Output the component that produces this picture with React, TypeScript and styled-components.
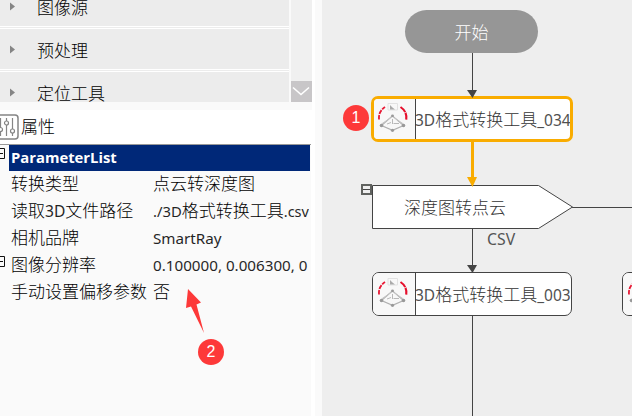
import React from 'react';
import styled, { createGlobalStyle } from 'styled-components';

const Global = createGlobalStyle`
  * { box-sizing: border-box; }
  body { margin: 0; overflow: hidden; font-family: "Noto Sans", "Noto Sans CJK SC", sans-serif; font-size: 17px; font-weight: 300; color: #000; }
  svg { display: block; }
`;

const Window = styled.div`
  display: grid;
  grid-template-columns: 312px 3px 7px 310px;
  width: 632px;
  height: 416px;
  overflow: hidden;
  background: #fff;
`;
const Side = styled.aside`
  display: flex;
  flex-direction: column;
  min-width: 0;
  height: 416px;
`;
const Splitter = styled.div`
  grid-column: 3;
  background: #fafafa;
`;
const ToolArea = styled.div`
  display: flex;
  gap: 2px;
  height: 110px;
  padding-bottom: 8px;
  background: #fafafa;
`;
const ToolList = styled.div`
  width: 289px;
  height: 102px;
  overflow: hidden;
  background: #fff;
`;
const ToolGroup = styled.div<{ $first?: boolean }>`
  display: flex;
  align-items: center;
  height: 40px;
  margin-top: ${(p) => (p.$first ? '-14px' : '0')};
  padding-left: 10px;
  gap: 22px;
  background: #ececec;
  color: #000;
  line-height: 20px;
`;
const GroupLabel = styled.span`
  padding-top: 3px;
`;
const Rule = styled.div`
  height: 3px;
  background: #ececec;
  border: solid #fff;
  border-width: 1px 0;
`;
const Scrollbar = styled.div`
  display: flex;
  flex-direction: column;
  justify-content: flex-end;
  width: 21px;
  height: 102px;
  background: #f0f0f0;
`;
const ScrollButton = styled.div`
  height: 21px;
  background: #c8c6c8;
`;
const Heading = styled.div`
  display: flex;
  align-items: center;
  gap: 2px;
  height: 34px;
  color: #000;
  line-height: 24px;
`;
const Grid = styled.div`
  flex: 1;
  width: 311px;
  border-top: 1px solid #999;
  background: #fafafa;
`;
const GridHeader = styled.div`
  display: grid;
  grid-template-columns: 9px 301px;
  height: 26px;
`;
const GridTitle = styled.div`
  padding-left: 2px;
  background: #002878;
  color: #fff;
  font: 700 14.8px/25px "Open Sans", sans-serif;
`;
const GridRow = styled.div`
  display: grid;
  grid-template-columns: 11px 142px 156px;
  height: 27px;
  line-height: 26px;
  white-space: nowrap;
`;
const Value = styled.div`
  overflow: hidden;
`;
const Latin = styled.span<{ $size?: number }>`
  font-family: "Noto Sans", sans-serif;
  font-size: ${(p) => p.$size ?? 15.6}px;
  font-weight: 400;
  opacity: 0.86;
`;
const Canvas = styled.main`
  position: relative;
  grid-column: 4;
  height: 416px;
  overflow: hidden;
  background: #eee;
  color: #333;
  white-space: nowrap;
`;
const Wires = styled.svg`
  position: absolute;
  inset: 0;
`;
const StartNode = styled.div`
  position: absolute;
  left: 83px;
  top: 10px;
  width: 133px;
  height: 43px;
  border-radius: 22px;
  background: #969696;
  color: #fff;
  text-align: center;
  line-height: 45px;
`;
const ToolNode = styled.div<{ $x: number; $y: number; $active?: boolean }>`
  position: absolute;
  left: ${(p) => p.$x}px;
  top: ${(p) => p.$y}px;
  display: grid;
  grid-template-columns: ${(p) => (p.$active ? 42 : 43)}px 1fr;
  width: ${(p) => (p.$active ? 202 : 200)}px;
  height: ${(p) => (p.$active ? 46 : 44)}px;
  border: ${(p) => (p.$active ? '3px solid #f9ac00' : '1px solid #444')};
  border-radius: 7px;
  background: #fff;
  overflow: hidden;
`;
const IconCell = styled.div<{ $active?: boolean }>`
  padding: ${(p) => (p.$active ? '3px 0 0 3px' : '4px 0 0 4px')};
  border-right: 1px solid #444;
  background: #f8f8f8;
`;
const NodeLabel = styled.div<{ $active?: boolean }>`
  line-height: ${(p) => (p.$active ? 42 : 44)}px;
  margin-left: -1px;
`;
const BranchLabel = styled.div`
  position: absolute;
  left: 82px;
  top: 186px;
  line-height: 44px;
`;
const EdgeLabel = styled.div`
  position: absolute;
  left: 165px;
  top: 227px;
  color: #555;
  font-size: 15.8px;
  font-weight: 400;
  line-height: 24px;
`;
const Badge = styled.div<{ $x: number; $y: number }>`
  position: absolute;
  left: ${(p) => p.$x}px;
  top: ${(p) => p.$y}px;
  width: 26px;
  height: 26px;
  border-radius: 50%;
  background: #fd3939;
  color: #fff;
  font: 16px/25px "Liberation Sans", sans-serif;
  text-align: center;
`;
const Pointer = styled.svg`
  position: absolute;
  left: 184px;
  top: 287px;
`;

const Triangle = () => (
  <svg width="5" height="9" viewBox="0 0 5 9"><path d="M0 .5L5 4.5L0 8.5Z" fill="#858585" /></svg>
);
const Minus = ({ y }: { y: number }) => (
  <svg width="6" height="26" viewBox="0 0 6 26">
    <path d={`M0 ${y + 0.5}H4.5V${y + 10.5}H0M0 ${y + 5.5}H3`} fill="none" stroke="#111" />
  </svg>
);
const Sliders = () => (
  <svg width="19" height="26" viewBox="0 0 19 26">
    <rect x="-8" y="1" width="26" height="24" rx="3" fill="#fff" stroke="#858585" strokeWidth="1.5" />
    <g fill="none" stroke="#858585" strokeWidth="1.2">
      <path d="M.5 4V13M.5 18V22M6.5 4V7M6.5 11V22M12.5 4V15M12.5 19V22" />
      <circle cx=".5" cy="15.5" r="2" /><circle cx="6.5" cy="9" r="2" /><circle cx="12.5" cy="17" r="2" />
    </g>
  </svg>
);
const ConvertIcon = () => (
  <svg width="32" height="32" viewBox="0 0 32 32" fill="none">
    <path d="M2 17.5C1.5 12 3.5 8 8 5" stroke="#e81935" strokeWidth="1.8" strokeDasharray="4.5 1" />
    <path d="M23.5 5C28 8 30 12 29.2 18" stroke="#e60f2c" strokeWidth="2.1" strokeDasharray="7 .7" />
    <path d="M11 1.5H20.5V8H11Z" stroke="#e2e2e2" />
    <path d="M13 3V7.5H18L15.5 5.5Z" fill="#aaa" />
    <path d="M15.5 13.8L26.5 23.5L15.5 28.3L4.5 23.5Z" stroke="#b0b0b0" strokeWidth="1.1" />
    <path d="M4.5 22L15.5 14.5L26.5 22" stroke="#c4c4c4" />
    <path d="M15.5 17V22M10 22L14 20.5M16.5 21.5H22" stroke="#b8b8b8" />
    <g fill="#999"><circle cx="15.5" cy="13.8" r="1.4" /><circle cx="4.5" cy="23.5" r="1.8" /><circle cx="26.5" cy="23.5" r="1.8" /><circle cx="15.5" cy="28.3" r="1.6" /></g>
  </svg>
);

type RowData = { name: React.ReactNode; value: React.ReactNode; open?: boolean };
const rows: RowData[] = [
  { name: '转换类型', value: '点云转深度图' },
  { name: <>读取<Latin>3D</Latin>文件路径</>, value: <><Latin $size={14.8}>./3D</Latin>格式转换工具<Latin $size={14.5}>.csv</Latin></> },
  { name: '相机品牌', value: <Latin $size={15.2}>SmartRay</Latin> },
  { name: '图像分辨率', value: <Latin $size={15.2}>0.100000, 0.006300, 0</Latin>, open: true },
  { name: '手动设置偏移参数', value: '否' },
];

const Tool = ({ x, y, code, active }: { x: number; y: number; code: string; active?: boolean }) => (
  <ToolNode $x={x} $y={y} $active={active}>
    <IconCell $active={active}><ConvertIcon /></IconCell>
    {code && <NodeLabel $active={active}><Latin $size={15.5}>3D</Latin>格式转换工具<Latin $size={15.5}>{code}</Latin></NodeLabel>}
  </ToolNode>
);

export default function App() {
  return (
    <>
      <Global />
      <Window>
        <Side>
          <ToolArea>
            <ToolList>
              <ToolGroup $first><Triangle /><GroupLabel>图像源</GroupLabel></ToolGroup>
              <Rule />
              <ToolGroup><Triangle /><GroupLabel>预处理</GroupLabel></ToolGroup>
              <Rule />
              <ToolGroup><Triangle /><GroupLabel>定位工具</GroupLabel></ToolGroup>
            </ToolList>
            <Scrollbar>
              <ScrollButton>
                <svg width="21" height="21"><path d="M2 6.5L10 13.5L18 6.5" fill="none" stroke="#fff" strokeWidth="1.6" /></svg>
              </ScrollButton>
            </Scrollbar>
          </ToolArea>
          <Heading><Sliders />属性</Heading>
          <Grid>
            <GridHeader><Minus y={3} /><GridTitle>ParameterList</GridTitle></GridHeader>
            {rows.map((r, i) => (
              <GridRow key={i}>
                <div>{r.open && <Minus y={4} />}</div>
                <div>{r.name}</div>
                <Value>{r.value}</Value>
              </GridRow>
            ))}
          </Grid>
        </Side>
        <Splitter />
        <Canvas>
          <StartNode>开始</StartNode>
          <Tool x={49} y={96} code="_034" active />
          <Tool x={50} y={272} code="_003" />
          <Tool x={300} y={272} code="" />
          <Wires width="310" height="416" fill="none" stroke="#444">
            <path d="M150.5 53V92M150.5 229V267M150.5 316V416M250 207.5H310" />
            <path d="M50.5 185.5H216.5L250.5 207L216.5 228.5H50.5Z" fill="#fff" />
            <path d="M145 90H155L150.5 98ZM145 265H155L150.5 273Z" fill="#444" stroke="none" />
            <path d="M150.5 142V179" stroke="#f9ac00" strokeWidth="3" />
            <path d="M145 177H155L150.5 187Z" fill="#f9ac00" stroke="none" />
            <path d="M40 185H49V194H40Z" fill="#eee" stroke="#60625f" strokeWidth="2" />
            <path d="M41 189.5H48" stroke="#444" />
          </Wires>
          <BranchLabel>深度图转点云</BranchLabel>
          <EdgeLabel>CSV</EdgeLabel>
          <Badge $x={21} $y={105}>1</Badge>
        </Canvas>
      </Window>
      <Pointer width="24" height="48"><path d="M4 2L17 15.5L12.5 17.5L20 46L7 19.5L2 21Z" fill="#fd3939" /></Pointer>
      <Badge $x={198} $y={339}>2</Badge>
    </>
  );
}
